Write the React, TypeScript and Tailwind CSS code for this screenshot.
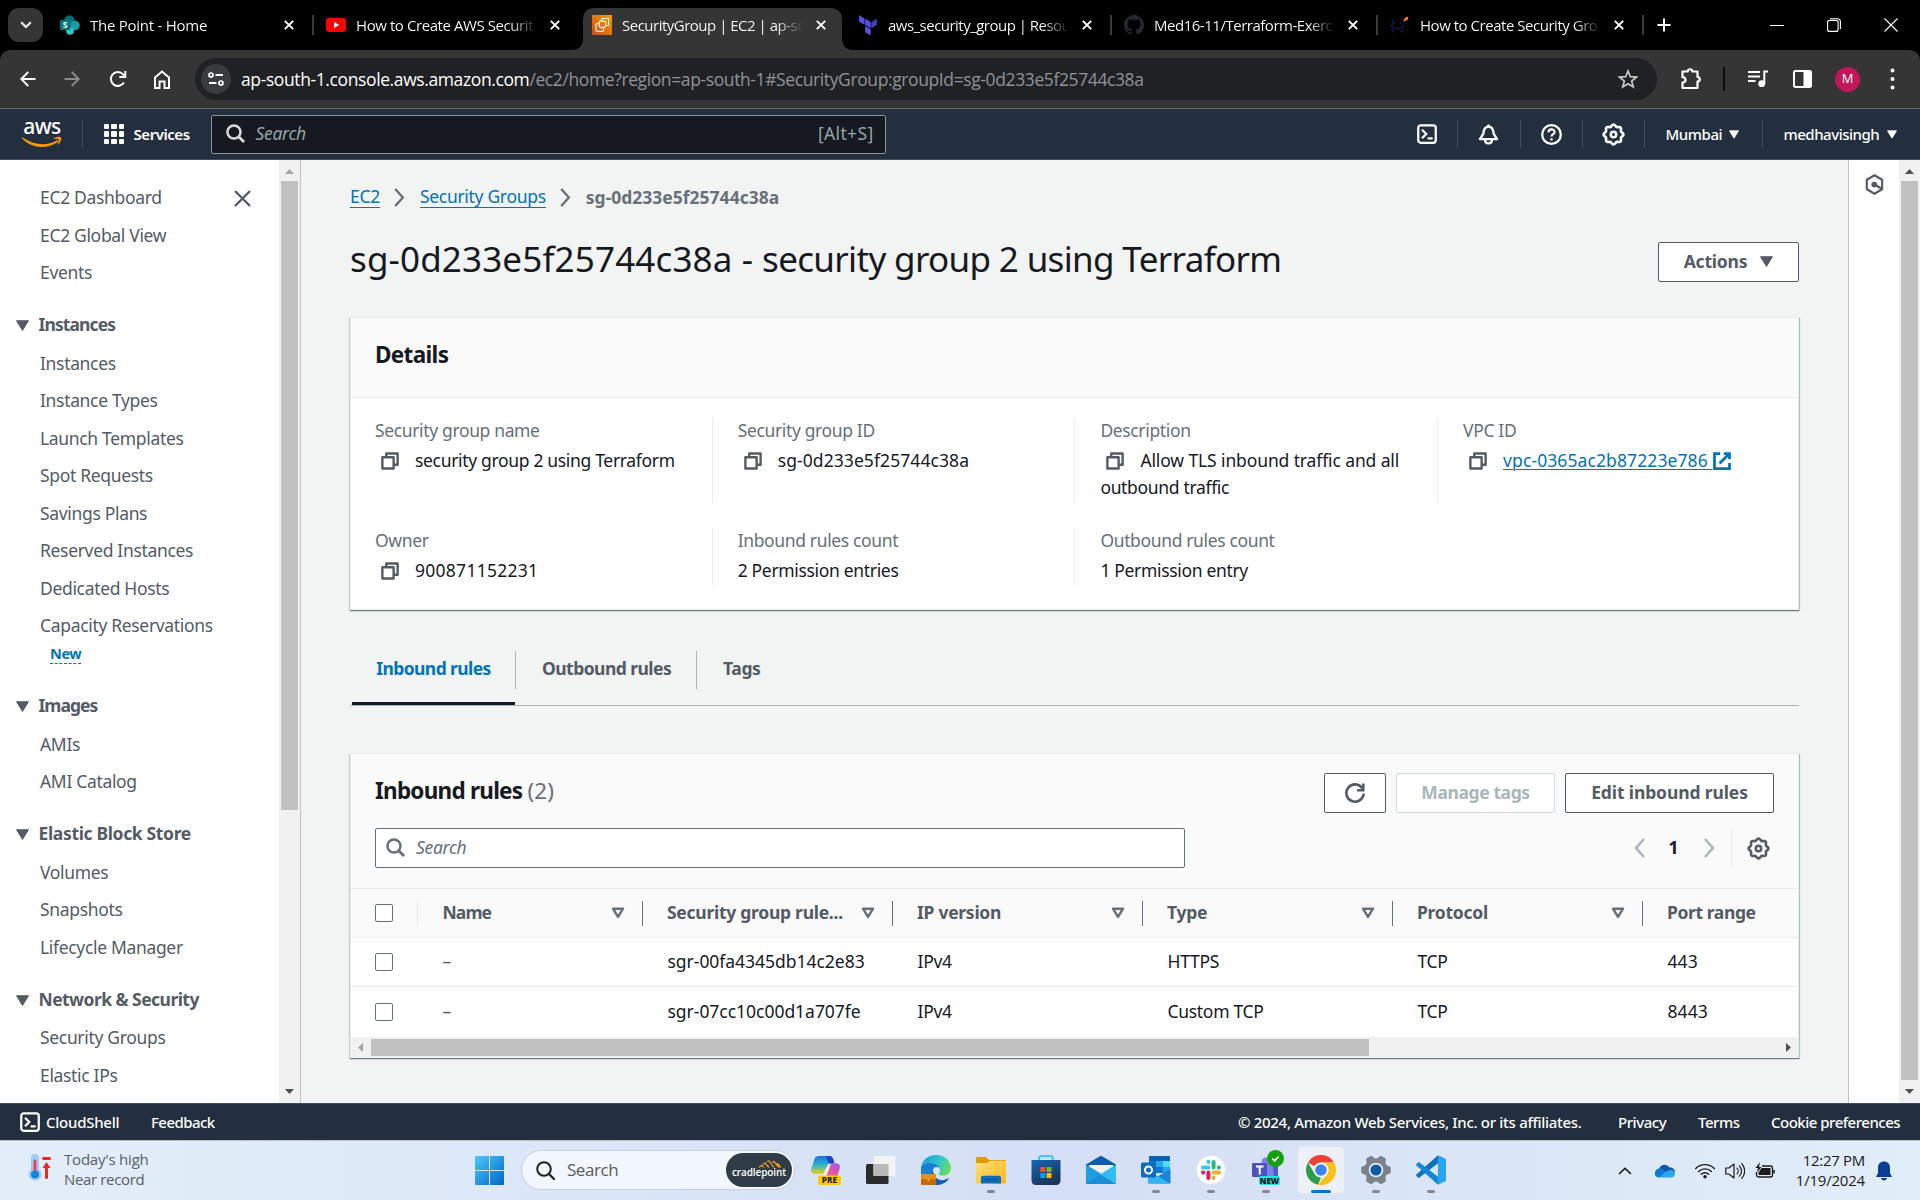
import type { ReactNode } from "react";

type IconProps = { className?: string; children?: ReactNode; box?: string };

function Svg({ className = "", children, box = "0 0 16 16" }: IconProps) {
  return (
    <svg viewBox={box} className={`shrink-0 ${className}`} fill="none">
      {children}
    </svg>
  );
}

/* ---------- shared glyphs ---------- */

const gearPath = (() => {
  const pts: string[] = [];
  for (let i = 0; i < 96; i++) {
    const a = (i / 96) * Math.PI * 2;
    const r = 6.25 + 0.6 * Math.cos(8 * a);
    pts.push(`${(8 + r * Math.cos(a)).toFixed(2)} ${(8 + r * Math.sin(a)).toFixed(2)}`);
  }
  return `M${pts.join("L")}Z`;
})();

const Gear = ({ className = "" }) => (
  <Svg className={className}>
    <path d={gearPath} stroke="currentColor" strokeWidth="1.8" />
    <circle cx="8" cy="8" r="1.9" stroke="currentColor" strokeWidth="1.7" />
  </Svg>
);
const ShellIcon = ({ className = "" }) => (
  <Svg className={className}>
    <rect x="1" y="1" width="14" height="14" rx="2" stroke="currentColor" strokeWidth="1.8" />
    <path d="M4 4.6 7.4 8 4 11.4M8.5 11.5h4" stroke="currentColor" strokeWidth="1.8" />
  </Svg>
);
const Glass = ({ className = "" }) => (
  <Svg className={className}>
    <circle cx="6.7" cy="6.7" r="5.5" stroke="currentColor" strokeWidth="2.1" />
    <path d="m10.7 10.7 4.5 4.5" stroke="currentColor" strokeWidth="2.3" />
  </Svg>
);
const CopyIcon = ({ className = "" }) => (
  <Svg className={`h-[20px] w-[20px] text-[#545b64] ${className}`}>
    <path d="M1.9 5h9v9h-9zM5 5V2h9.1v9H11" stroke="currentColor" strokeWidth="1.9" strokeLinejoin="round" />
  </Svg>
);
const Chevron = ({ className = "", left = false }) => (
  <Svg className={className} box="0 0 11 20">
    <path d={left ? "M10 1 2 10l8 9" : "M1 1l8 9-8 9"} stroke="currentColor" strokeWidth="2.5" />
  </Svg>
);
const Caret = ({ className = "" }) => (
  <Svg className={className} box="0 0 12 10">
    <path d="M.6.6h10.8L6 9.4z" fill="currentColor" stroke="currentColor" strokeLinejoin="round" />
  </Svg>
);
const HollowCaret = () => (
  <Svg className="h-[12px] w-[14px] text-[#687078]" box="0 0 14 12">
    <path d="M2 1.7h10L7 9.9z" stroke="currentColor" strokeWidth="2.5" strokeLinejoin="round" />
  </Svg>
);
const Cross = ({ className = "" }) => (
  <Svg className={className} box="0 0 10 10">
    <path d="m.8.8 8.4 8.4M9.2.8.8 9.2" stroke="currentColor" strokeWidth="1.9" />
  </Svg>
);

/* ---------- favicons ---------- */

const SharePoint = () => (
  <Svg className="h-5 w-5" box="0 0 20 20">
    <circle cx="9.5" cy="5.5" r="5.3" fill="#036c70" />
    <circle cx="15" cy="10.5" r="4.8" fill="#1a9ba1" />
    <circle cx="10" cy="16" r="3.8" fill="#37c6d0" />
    <rect x="0" y="5" width="10.5" height="10" rx="1" fill="#03787c" />
    <text x="5.2" y="13.2" textAnchor="middle" fontSize="8.5" fontWeight="700" fill="#fff" fontFamily="Noto Sans, sans-serif">S</text>
  </Svg>
);
const YouTube = () => (
  <Svg className="h-5 w-5" box="0 0 20 20">
    <rect x="0" y="3" width="20" height="14" rx="3.2" fill="#f00" />
    <path d="M8 7v6l5.2-3z" fill="#fff" />
  </Svg>
);
const Ec2 = () => (
  <Svg className="h-5 w-5" box="0 0 20 20">
    <defs>
      <linearGradient id="ec2" x1="0" y1="1" x2="1" y2="0">
        <stop stopColor="#c8511b" />
        <stop offset="1" stopColor="#f90" />
      </linearGradient>
    </defs>
    <path fill="url(#ec2)" d="M0 0h20v20H0z" />
    <path d="M7.5 6.2h6v6h-6zM9.5 6V3.5h7v7h-2.8M7.3 8.8H4v7.5h7.5v-3.7" stroke="#fff" strokeWidth="1" />
    <path d="M9 5v1.2M11 5v1.2M9 12.2v1.4M11.5 12.2v1.4M6.2 8h1.3M6.2 10.5h1.3M13.5 8h1.3M13.5 10.5h1.3" stroke="#fff" strokeWidth=".8" />
  </Svg>
);
const TerraformMark = () => (
  <Svg className="h-5 w-5" box="0 0 20 20">
    <path d="M1 .2 6.5 3.4v6.3L1 6.5zM7.2 3.8l5.5 3.2v6.3L7.2 10.1zM7.2 11l5.5 3.2v6.3L7.2 17.2z" fill="#5c4ee5" />
    <path d="m13.4 7 5.4-3.2v6.3l-5.4 3.2z" fill="#4040b2" />
  </Svg>
);
const GitHubMark = () => (
  <Svg className="h-5 w-5" box="0 0 16 16">
    <path
      fill="#24292f"
      d="M8 0C3.580 0 0 3.580 0 8c0 3.540 2.290 6.530 5.470 7.590.4.070.55-.17.55-.38 0-.19-.01-.82-.01-1.490-2.010.37-2.530-.49-2.690-.94-.09-.23-.48-.94-.82-1.130-.28-.15-.68-.52-.01-.53.63-.01 1.080.58 1.230.82.72 1.210 1.870.87 2.330.66.07-.52.28-.87.51-1.070-1.780-.2-3.640-.89-3.640-3.950 0-.87.31-1.590.82-2.150-.08-.2-.36-1.020.08-2.120 0 0 .67-.21 2.200.82.64-.18 1.320-.27 2-.27s1.360.09 2 .27c1.530-1.040 2.200-.82 2.200-.82.44 1.100.16 1.920.08 2.120.51.56.82 1.270.82 2.150 0 3.070-1.870 3.750-3.650 3.950.29.25.54.73.54 1.480 0 1.070-.01 1.930-.01 2.200 0 .21.15.46.55.38A8.010 8.010 0 0 0 16 8c0-4.420-3.580-8-8-8z"
    />
  </Svg>
);
const SmileMark = () => (
  <Svg className="h-5 w-5" box="0 0 20 20">
    <path d="M4 5.5H2.5v4L1 11l1.5 1.5v4H4M10 16.5h2.5v-7M5 12c1.5 2.5 4.5 2.5 6 0M5 7v2M10.5 7v2" stroke="#14143c" strokeWidth="1.5" />
    <path d="m13 7 2-4.500 3 2z" fill="#ff7a1a" />
    <circle cx="17" cy="3" r="1.300" fill="#ff7a1a" />
  </Svg>
);

/* ---------- browser chrome ---------- */

const browserTabs = [
  { title: "The Point - Home", icon: <SharePoint />, sep: true, spacing: "tracking-[-0.25px]" },
  { title: "How to Create AWS Securit", icon: <YouTube />, spacing: "tracking-[-0.42px]" },
  { title: "SecurityGroup | EC2 | ap-so", icon: <Ec2 />, active: true, spacing: "tracking-[-0.5px]" },
  { title: "aws_security_group | Resou", icon: <TerraformMark />, sep: true, spacing: "tracking-[-0.52px]" },
  { title: "Med16-11/Terraform-Exerc", icon: <GitHubMark />, sep: true, spacing: "tracking-[-0.48px]" },
  { title: "How to Create Security Gro", icon: <SmileMark />, sep: true, spacing: "tracking-[-0.47px]" },
];

function TabStrip() {
  return (
    <div className="flex h-[50px] shrink-0 bg-black text-white">
      <div className="mt-2 ml-2 flex h-[34px] w-[35px] items-center justify-center rounded-[11px] bg-[#353535]">
        <Svg className="h-[8px] w-[12px]" box="0 0 12 8">
          <path d="m1.200 1.200 4.800 4.800 4.800-4.800" stroke="#fff" strokeWidth="2" />
        </Svg>
      </div>
      <div className="ml-[3px] flex">
        {browserTabs.map((t) => (
          <div key={t.title} className="relative flex w-[266px] items-center">
            {t.active && (
              <Svg className="absolute top-2 -left-[7px] h-[42px] w-[283px]" box="0 0 283 42">
                <path d="M0 42Q12 42 12 30V12Q12 0 24 0H259Q271 0 271 12V30Q271 42 283 42Z" fill="#353535" />
              </Svg>
            )}
            <div className="relative ml-[14px] h-5 w-5">{t.icon}</div>
            <div className={`relative ml-[10px] w-[181px] bg-linear-to-r from-white from-85% to-transparent bg-clip-text font-['Open_Sans'] text-[15px] leading-[24px] whitespace-nowrap text-transparent ${t.spacing}`}>
              {t.title}
            </div>
            <Cross className="relative ml-[13px] h-[10px] w-[10px]" />
            {t.sep && <div className="-mr-[1.5px] ml-auto h-5 w-[2px] bg-[#3a3a3a]" />}
          </div>
        ))}
      </div>
      <Svg className="mt-[18px] ml-[15px] h-[14px] w-[14px]" box="0 0 14 14">
        <path d="M7 .5v13M.5 7h13" stroke="#fff" strokeWidth="2" />
      </Svg>
      <div className="ml-auto flex items-center gap-[43px] pr-[22px]">
        <div className="h-px w-[14px] bg-white" />
        <Svg className="h-[14px] w-[14px]" box="0 0 14 14">
          <rect x=".6" y="2.400" width="10.500" height="11" rx="2" stroke="#fff" strokeWidth="1.100" />
          <path d="M3 .7h7.500a2.900 2.900 0 0 1 2.900 2.900V11" stroke="#fff" strokeWidth="1.100" />
        </Svg>
        <Svg className="h-[14px] w-[14px]" box="0 0 14 14">
          <path d="m.5.5 13 13M13.500.5l-13 13" stroke="#fff" strokeWidth="1.100" />
        </Svg>
      </div>
    </div>
  );
}

function Toolbar() {
  return (
    <div className="shrink-0 bg-black">
      <div className="flex h-[58px] items-center rounded-t-[10px] bg-[#353535] text-white">
        <Svg className="ml-[20px] h-4 w-4" box="0 0 16 16">
          <path d="M15.500 8H1.500M8.200 1 1.300 8l6.900 7" stroke="#fff" strokeWidth="2" />
        </Svg>
        <Svg className="ml-[28px] h-4 w-4" box="0 0 16 16">
          <path d="M.5 8h14M7.800 1l6.900 7-6.900 7" stroke="#8a8a8a" strokeWidth="2" />
        </Svg>
        <Svg className="ml-[29px] h-[18px] w-[18px]" box="0 0 18 18">
          <path d="M14.900 12.500A7 7 0 1 1 14 4.200L15.800 6" stroke="#fff" strokeWidth="2" />
          <path d="M16.300 1v6h-6" stroke="#fff" strokeWidth="2" />
        </Svg>
        <Svg className="ml-[27px] h-[19px] w-[16px]" box="0 0 16 19">
          <path d="M1 7.500 8 1.500l7 6V18h-4.500v-6.500h-5V18H1z" stroke="#fff" strokeWidth="2" />
        </Svg>
        <div className="ml-[25px] flex h-[42px] w-[1462px] items-center rounded-full bg-[#202124]">
          <div className="ml-[6px] flex h-[30px] w-[30px] items-center justify-center rounded-full bg-[#3a3b3e]">
            <Svg className="h-[14px] w-[16px]" box="0 0 16 14">
              <circle cx="3" cy="3" r="2" stroke="#fff" strokeWidth="1.700" />
              <circle cx="13" cy="11" r="2" stroke="#fff" strokeWidth="1.700" />
              <path d="M7.500 3H15M1 11h7.500" stroke="#fff" strokeWidth="1.800" />
            </Svg>
          </div>
          <div className="ml-[10px] font-['Open_Sans'] text-[17.5px] leading-[26px] tracking-[-0.39px] whitespace-nowrap text-[#8f9398]">
            <span className="text-white">ap-south-1.console.aws.amazon.com</span>
            /ec2/home?region=ap-south-1#SecurityGroup:groupId=sg-0d233e5f25744c38a
          </div>
          <Svg className="mr-[19px] ml-auto h-5 w-5" box="0 0 20 20">
            <path d="m10 2 2.300 5.700 6.100.4-4.700 3.900 1.500 6L10 14.700 4.800 18l1.500-6L1.600 8.100l6.100-.4z" stroke="#c7c7c7" strokeWidth="1.700" />
          </Svg>
        </div>
        <Svg className="ml-[23px] h-[24px] w-[22px]" box="0 0 22 24">
          <path d="M2.500 4.500h5.200c0-3 4.600-3 4.600 0h5.200V10c3 0 3 4.500 0 4.500V21h-15v-5.500c4 0 4-5.300 0-5.300z" stroke="#fff" strokeWidth="2.200" strokeLinejoin="round" />
        </Svg>
        <div className="ml-[21px] h-6 w-[2px] bg-[#0c0c0c]" />
        <Svg className="ml-[23px] h-[18px] w-[20px]" box="0 0 20 18">
          <path d="M0 2h12M0 6.500h12M0 11h7.500M16.300 14V1.500H20" stroke="#fff" strokeWidth="2" />
          <circle cx="13.700" cy="13.700" r="3.400" fill="#fff" />
        </Svg>
        <Svg className="ml-[25px] h-[18px] w-[19px]" box="0 0 19 18">
          <rect x="1" y="1" width="17" height="16" rx="1.500" stroke="#fff" strokeWidth="2" />
          <path d="M10.500 1H18v16h-7.500z" fill="#fff" />
        </Svg>
        <div className="ml-[23px] flex h-[25px] w-[25px] items-center justify-center rounded-full bg-[#c2185b] font-['Open_Sans'] text-[13px]">
          M
        </div>
        <Svg className="ml-[30px] h-[22px] w-[5px]" box="0 0 5 22">
          <path d="M2.500 2.500h0M2.500 11h0M2.500 19.500h0" stroke="#fff" strokeWidth="4" strokeLinecap="round" />
        </Svg>
      </div>
    </div>
  );
}

/* ---------- AWS navigation ---------- */

const NavSep = ({ className = "" }) => <div className={`h-7 w-px shrink-0 bg-[#414d5c] ${className}`} />;

function AwsNav() {
  return (
    <div className="flex h-[52px] shrink-0 items-center border-t border-b border-t-[#6b6b66] border-b-[#414d5c] bg-[#232f3e] text-white">
      <div className="ml-[22px] flex w-[40px] flex-col items-center">
        <span className="h-[16px] font-['Noto_Sans'] text-[21px] leading-[12px] font-medium tracking-[-0.6px]">aws</span>
        <Svg className="h-[12px] w-[40px]" box="0 0 40 12">
          <path d="M.6 1.600C11 9 25 10.500 34.500 4.400c1.500-.7 2.500.7 1.200 1.600C25 13.600 9.500 12.800.2 2.600c-.5-.6-.2-1.300.4-1z" fill="#f90" />
          <path d="M31.500 2.300C34 .4 38 .2 39 1.300c.8 1.200-.2 5-2.600 7-.5.400-.9.200-.7-.3.800-2 1.500-4 .9-4.700-.6-.7-2.900-.6-4.600-.4-.600 0-.8-.4-.5-.6z" fill="#f90" />
        </Svg>
      </div>
      <NavSep className="ml-[20px]" />
      <div className="ml-[20.5px] grid grid-cols-3 gap-[2px]">
        {Array.from({ length: 9 }, (_, i) => (
          <div key={i} className="h-[5.5px] w-[5.5px] rounded-[1px] bg-white" />
        ))}
      </div>
      <span className="ml-[9.5px] w-[57px] text-[15px] font-semibold tracking-[-0.45px]">Services</span>
      <div className="ml-[20px] flex h-[39px] w-[675px] items-center rounded-[2px] border border-[#879596] bg-[#161920] pb-px">
        <Glass className="ml-[14px] h-[19px] w-[19px] text-[#d5dbdb]" />
        <span className="ml-[11px] text-[17.5px] tracking-[-0.3px] text-[#95a5a6] italic">Search</span>
        <span className="mr-[11px] ml-auto text-[17.5px] tracking-[0.35px] text-[#95a5a6]">[Alt+S]</span>
      </div>
      <ShellIcon className="ml-[531px] h-[20px] w-[20px]" />
      <NavSep className="ml-[20px]" />
      <Svg className="ml-[20px] h-[21px] w-[21px]" box="0 0 16 16">
        <path d="M1.500 11.500 4 7.500C4.300 4 5.500 2 8 2s3.700 2 4 5.500l2.500 4z" stroke="#fff" strokeWidth="1.800" strokeLinejoin="round" />
        <path d="M8 2V.4M5.500 11.500v1c0 3 5 3 5 0v-1" stroke="#fff" strokeWidth="1.800" />
      </Svg>
      <NavSep className="ml-[21px]" />
      <Svg className="ml-[20px] h-[21px] w-[21px]" box="0 0 16 16">
        <circle cx="8" cy="8" r="7.100" stroke="#fff" strokeWidth="1.700" />
        <path d="M5.700 6.300C5.700 3.300 10.300 3.300 10.300 6.200 10.300 7.700 8 7.800 8 9.600M8 10.800v1.700" stroke="#fff" strokeWidth="1.700" />
      </Svg>
      <NavSep className="ml-[20px]" />
      <Gear className="ml-[19px] h-[23px] w-[23px]" />
      <NavSep className="ml-[19px]" />
      <span className="ml-[21px] w-[57px] text-[15px] font-medium tracking-[-0.45px]">Mumbai</span>
      <Caret className="ml-[6px] h-[9px] w-[10px]" />
      <NavSep className="ml-[23px]" />
      <span className="ml-[21px] w-[97px] text-[15px] font-medium tracking-[-0.48px]">medhavisingh</span>
      <Caret className="ml-[6px] h-[9px] w-[10px]" />
    </div>
  );
}

/* ---------- sidebar ---------- */

const sections = [
  {
    title: "Instances",
    items: ["Instances", "Instance Types", "Launch Templates", "Spot Requests", "Savings Plans", "Reserved Instances", "Dedicated Hosts", "Capacity Reservations"],
    isNew: true,
    spacing: "tracking-[-0.9px]",
  },
  { title: "Images", items: ["AMIs", "AMI Catalog"], spacing: "tracking-[-0.95px]" },
  { title: "Elastic Block Store", items: ["Volumes", "Snapshots", "Lifecycle Manager"], spacing: "tracking-[-0.35px]" },
  { title: "Network & Security", items: ["Security Groups", "Elastic IPs"], spacing: "tracking-[-0.55px]" },
];

const NavItem = ({ text }: { text: string }) => (
  <div className="flex h-[37.5px] items-center pl-[40px] text-[17.5px] tracking-[-0.33px] text-[#545b64]">{text}</div>
);

const ScrollArrow = ({ up = false, className = "" }) => (
  <Svg className={`h-[5px] w-[9px] ${className}`} box="0 0 9 5">
    <path d={up ? "M0 5 4.500 0 9 5z" : "M0 0l4.500 5L9 0z"} fill="currentColor" />
  </Svg>
);

function Sidebar() {
  return (
    <div className="flex w-[301px] shrink-0 border-r border-[#bcc3c4] bg-white">
      <div className="flex-1 overflow-hidden pt-[18.6px]">
        <div className="flex justify-between pr-[28px]">
          <NavItem text="EC2 Dashboard" />
          <Svg className="mt-[11.4px] h-[17px] w-[17px]" box="0 0 17 17">
            <path d="m1 1 15 15M16 1 1 16" stroke="#545b64" strokeWidth="2.400" />
          </Svg>
        </div>
        <NavItem text="EC2 Global View" />
        <NavItem text="Events" />
        {sections.map((s) => (
          <div key={s.title} className="pt-[19.5px]">
            <div className="mb-[6px] flex h-[27.5px] items-center">
              <Caret className="mt-[3px] ml-[15.5px] h-[11px] w-[13px] text-[#545b64]" />
              <span className={`ml-[10px] text-[17.5px] font-bold text-[#545b64] ${s.spacing}`}>{s.title}</span>
            </div>
            {s.items.map((i) => (
              <NavItem key={i} text={i} />
            ))}
            {s.isNew && (
              <div className="-mt-[3px] h-[31px] pl-[50px]">
                <span className="inline-block border-b border-dashed border-[#0073bb] text-[14.5px] leading-[20px] font-bold tracking-[-0.4px] text-[#0073bb]">New</span>
              </div>
            )}
          </div>
        ))}
      </div>
      <div className="flex w-[21px] flex-col items-center bg-[#f1f1f1]">
        <ScrollArrow up className="mt-[9px] text-[#a3a3a3]" />
        <div className="mt-[7px] h-[629px] w-[17px] bg-[#c1c1c1]" />
        <ScrollArrow className="mt-auto mb-[9px] text-[#505050]" />
      </div>
    </div>
  );
}

/* ---------- details card ---------- */

function Cell({ label, children, last = false }: { label: string; children: ReactNode; last?: boolean }) {
  return (
    <div className={`w-[362.7px] shrink-0 pr-[20px] pl-[25px] ${last ? "" : "border-r border-[#eaeded]"}`}>
      <div className="text-[17.5px] leading-[25px] tracking-[-0.36px] text-[#687078]">{label}</div>
      <div className="mt-[4px] text-[17.5px] leading-[27px] tracking-[-0.33px] text-[#16191f]">{children}</div>
    </div>
  );
}

const Copyable = ({ children }: { children: ReactNode }) => (
  <>
    <CopyIcon className="mr-[15px] ml-[5px] inline-block align-[-4px]" />
    {children}
  </>
);

const card = "border border-[#eaeded] bg-white shadow-[0_1px_1px_#6f8083,1px_1px_1px_#c3caca,-1px_1px_1px_#d5dbdb]";

function Details() {
  return (
    <div className={`mt-[35px] h-[293px] w-[1449px] ${card}`}>
      <div className="flex h-[80px] items-center border-b border-[#eaeded] bg-[#fafafa] pb-[5px] pl-[24px] text-[22.5px] font-bold tracking-[-0.65px] text-[#16191f]">
        Details
      </div>
      <div className="-ml-px flex h-[105px] pt-[20px]">
        <Cell label="Security group name">
          <Copyable>security group 2 using Terraform</Copyable>
        </Cell>
        <Cell label="Security group ID">
          <Copyable>
            <span className="tracking-[0.08px]">sg-0d233e5f25744c38a</span>
          </Copyable>
        </Cell>
        <Cell label="Description">
          <Copyable>
            <span className="tracking-[-0.12px]">Allow TLS inbound traffic and all</span> outbound traffic
          </Copyable>
        </Cell>
        <Cell label="VPC ID" last>
          <Copyable>
            <span className="tracking-[0.1px] text-[#0073bb] underline decoration-1 underline-offset-2">vpc-0365ac2b87223e786 </span>
            <Svg className="inline-block h-[20px] w-[20px] align-[-4px]" box="0 0 16 16">
              <path d="M9.500 2H14v4.500M6 10l8-8M14 9.500V14H2V2h4.500" stroke="#0073bb" strokeWidth="2.200" />
            </Svg>
          </Copyable>
        </Cell>
      </div>
      <div className="mt-[25px] -ml-px flex h-[57px]">
        <Cell label="Owner">
          <Copyable>
            <span className="tracking-[0.27px]">900871152231</span>
          </Copyable>
        </Cell>
        <Cell label="Inbound rules count">2 Permission entries</Cell>
        <Cell label="Outbound rules count" last>
          1 Permission entry
        </Cell>
      </div>
    </div>
  );
}

/* ---------- inbound rules ---------- */

function Tabs() {
  return (
    <div className="mt-[26px] flex h-[70px] w-[1449px] border-b border-[#aab7b8] text-[17.5px] font-bold tracking-[-0.6px] text-[#545b64]">
      <div className="ml-[2px] flex h-[69px] w-[163px] justify-center border-b-[3px] border-[#16191f] pt-[19px] text-[#0073bb]">Inbound rules</div>
      <div className="mt-[15px] h-[38px] w-px bg-[#aab7b8]" />
      <div className="w-[180px] pt-[19px] pl-[26px] tracking-[-0.55px]">Outbound rules</div>
      <div className="mt-[15px] h-[38px] w-px bg-[#aab7b8]" />
      <div className="pt-[19px] pl-[26px] tracking-[-0.4px]">Tags</div>
    </div>
  );
}

const Box = () => <div className="h-[18px] w-[18px] rounded-[2px] border border-[#687078] bg-white" />;

const columns = ["Security group rule...", "IP version", "Type", "Protocol"];
const rows = [
  ["sgr-00fa4345db14c2e83", "IPv4", "HTTPS", "TCP", "443"],
  ["sgr-07cc10c00d1a707fe", "IPv4", "Custom TCP", "TCP", "8443"],
];
const btn = "flex h-[40px] items-center justify-center rounded-[2px] border bg-white text-[17.5px] font-bold";

function Rules() {
  return (
    <div className={`mt-[47px] h-[305px] w-[1449px] ${card}`}>
      <div className="h-[134px] bg-[#fafafa]">
        <div className="flex pt-[19px] pl-[24px]">
          <div className="pt-px text-[22.5px] font-bold tracking-[-0.75px] text-[#16191f]">
            Inbound rules <span className="font-normal tracking-[0.1px] text-[#687078]">(2)</span>
          </div>
          <div className="mr-[24px] ml-auto flex gap-[10px]">
            <div className={`${btn} w-[62px] border-[#545b64]`}>
              <Svg className="h-[22px] w-[22px]">
                <path d="M14.300 8.500A6.300 6.300 0 1 1 13.300 4.600" stroke="#545b64" strokeWidth="1.900" />
                <path d="M14 1v5H9.500" stroke="#545b64" strokeWidth="1.900" />
              </Svg>
            </div>
            <div className={`${btn} w-[159px] border-[#d5dbdb] pb-[2px] tracking-[-0.4px] text-[#aab7b8]`}>Manage tags</div>
            <div className={`${btn} w-[209px] border-[#545b64] pb-[2px] tracking-[-0.12px] text-[#545b64]`}>Edit inbound rules</div>
          </div>
        </div>
        <div className="mt-[15px] flex items-center pl-[24px]">
          <div className="flex h-[40px] w-[810px] items-center rounded-[2px] border border-[#687078] bg-white pb-px">
            <Glass className="ml-[10px] h-[19px] w-[19px] text-[#687078]" />
            <span className="ml-[11px] text-[17.5px] tracking-[-0.3px] text-[#687078] italic">Search</span>
          </div>
          <Chevron left className="ml-[449px] h-[20px] w-[11px] text-[#aab7b8]" />
          <span className="ml-[22.5px] w-[12px] pb-px text-center text-[17.5px] font-bold text-[#16191f]">1</span>
          <Chevron className="ml-[24px] h-[20px] w-[11px] text-[#aab7b8]" />
          <div className="ml-[16px] h-[38px] w-px bg-[#eaeded]" />
          <Gear className="ml-[15px] h-[23px] w-[23px] text-[#545b64]" />
        </div>
      </div>
      <div className="flex h-[50px] items-center border-y border-[#eaeded] bg-[#fafafa] pl-[24px] text-[17.5px] leading-[24px] font-bold text-[#545b64]">
        <Box />
        <div className="ml-[24px] h-[25px] w-px bg-[#eaeded]" />
        <div className="flex w-[224px] items-center pl-[24.5px]">
          <span className="pb-[3px] tracking-[-0.9px]">Name</span>
          <span className="mr-[17px] ml-auto">
            <HollowCaret />
          </span>
        </div>
        {columns.map((c) => (
          <div key={c} className="flex w-[250px] items-center">
            <div className="mr-[24px] h-[25px] w-px bg-[#687078]" />
            <span className="pb-[3px] tracking-[-0.27px]">{c}</span>
            <span className="mr-[17px] ml-auto">
              <HollowCaret />
            </span>
          </div>
        ))}
        <div className="mr-[24px] h-[25px] w-px bg-[#687078]" />
        <span className="pb-[3px] tracking-[-0.4px]">Port range</span>
      </div>
      {rows.map((r, k) => (
        <div
          key={r[0]}
          className={`flex items-center pl-[24px] text-[17.5px] leading-[24px] tracking-[-0.3px] text-[#16191f] ${k === 0 ? "h-[49px] border-b border-[#eaeded]" : "h-[50px]"}`}
        >
          <Box />
          <span className="ml-[49.5px] w-[225px] pb-[3px] text-[#545b64]">–</span>
          <span className="w-[250px] pb-[3px] tracking-[-0.03px]">{r[0]}</span>
          {r.slice(1).map((v, i) => (
            <span key={i} className={i === 3 ? "pb-[3px] tracking-[0.1px]" : "w-[250px] pb-[3px]"}>
              {v}
            </span>
          ))}
        </div>
      ))}
      <div className="flex h-[21px] items-center bg-[#f1f1f1]">
        <Svg className="ml-[7px] h-[9px] w-[5px]" box="0 0 5 9">
          <path d="M5 0 0 4.500 5 9z" fill="#a3a3a3" />
        </Svg>
        <div className="ml-[8px] h-[17px] w-[998px] bg-[#c1c1c1]" />
        <Svg className="mr-[7px] ml-auto h-[9px] w-[5px]" box="0 0 5 9">
          <path d="m0 0 5 4.500L0 9z" fill="#505050" />
        </Svg>
      </div>
    </div>
  );
}

function Main() {
  return (
    <div className="flex-1 overflow-hidden bg-[#f2f3f3] pl-[49px]">
      <div className="mt-[23px] flex h-[28px] items-center text-[17.5px] tracking-[-0.3px] text-[#0073bb]">
        <span className="border-b border-[#0073bb] leading-[21px]">EC2</span>
        <Chevron className="ml-[14.5px] h-[19px] w-[11px] text-[#687078]" />
        <span className="ml-[14.5px] border-b border-[#0073bb] leading-[21px]">Security Groups</span>
        <Chevron className="ml-[14px] h-[19px] w-[11px] text-[#687078]" />
        <span className="ml-[15px] font-bold tracking-[0px] text-[#687078]">sg-0d233e5f25744c38a</span>
      </div>
      <div className="mt-[30px] flex h-[41px] items-center text-[#16191f]">
        <span className="pb-[5px] text-[35px]">
          <span className="tracking-[0.15px]">sg-0d233e5f25744c38a</span>
          <span className="tracking-[0px]"> - </span>
          <span className="tracking-[-0.66px]">security group 2 using Terraform</span>
        </span>
        <div className={`${btn} mr-[49px] ml-auto w-[141px] border-[#545b64] pb-px text-[#545b64]`}>
          <span className="tracking-[-0.2px]">Actions</span>
          <Caret className="ml-[13px] h-[11px] w-[13px]" />
        </div>
      </div>
      <Details />
      <Tabs />
      <Rules />
    </div>
  );
}

function RightRail() {
  return (
    <>
      <div className="w-[51px] shrink-0 border-l border-[#bcc3c4] bg-white pt-[14px] pl-[15px]">
        <Svg className="h-[21px] w-[21px]" box="0 0 20 20">
          <path d="m10 1.200 7.300 4.300v9L10 18.800l-7.300-4.300v-9z" stroke="#545b64" strokeWidth="2" strokeLinejoin="round" />
          <path d="M9.800 7.300a2.800 2.800 0 1 0 2.800 2.800 2.800 2.800 0 0 0-2.800-2.800z" fill="#545b64" />
          <path d="m10 10 6.500 3.800" stroke="#545b64" strokeWidth="2.200" />
        </Svg>
      </div>
      <div className="flex w-[21px] shrink-0 flex-col items-center bg-[#f1f1f1]">
        <ScrollArrow up className="mt-[9px] text-[#505050]" />
        <div className="mt-[7px] h-[899px] w-[17px] bg-[#c1c1c1]" />
        <ScrollArrow className="mt-[9px] text-[#505050]" />
      </div>
    </>
  );
}

function Footer() {
  return (
    <div className="flex h-[37px] shrink-0 items-center border-t border-[#414d5c] bg-[#232f3e] text-[15px] font-medium tracking-[-0.45px] whitespace-nowrap text-white">
      <ShellIcon className="ml-[20px] h-[20px] w-[20px]" />
      <span className="ml-[6px] w-[74px] tracking-[-0.25px]">CloudShell</span>
      <span className="ml-[31px] tracking-[-0.55px]">Feedback</span>
      <span className="ml-auto w-[343px] tracking-[-0.3px]">© 2024, Amazon Web Services, Inc. or its affiliates.</span>
      <span className="ml-[37px] w-[49px]">Privacy</span>
      <span className="ml-[31px] w-[42px]">Terms</span>
      <span className="mr-[19px] ml-[31px] w-[130px] tracking-[-0.5px]">Cookie preferences</span>
    </div>
  );
}

/* ---------- Windows taskbar ---------- */

const Copilot = () => (
  <Svg className="h-[30px] w-[30px]" box="0 0 30 30">
    <defs>
      <linearGradient id="cpa" x1="0" y1="0" x2="0" y2="1">
        <stop stopColor="#1b6fe8" />
        <stop offset=".5" stopColor="#2fb4c8" />
        <stop offset="1" stopColor="#e8d21f" />
      </linearGradient>
      <linearGradient id="cpb" x1="1" y1="0" x2="0" y2="1">
        <stop stopColor="#a04df0" />
        <stop offset=".55" stopColor="#ee5a9c" />
        <stop offset="1" stopColor="#f9873e" />
      </linearGradient>
    </defs>
    <path d="M8 1h10c3 0 4 2 4.700 5l.8 2.500H18L13 19H4c-3.500 0-4.500-2.500-3.500-6L3.500 4C4.300 2 5.500 1 8 1z" fill="url(#cpa)" />
    <path d="M15 1h3c3 0 4 2 4.700 5l.8 2.500h-6z" fill="#1747c8" />
    <path d="M18.500 8.500H25c3.300 0 4.400 2 3.600 5l-2.300 8c-.7 2-2 3-4 3H10c3 0 4-3 5-6z" fill="url(#cpb)" />
    <path d="M17 9h3l-4.500 12h-4z" fill="#fff" opacity=".8" />
    <rect x="7" y="20.500" width="23" height="9.500" rx="2.500" fill="#ffc800" />
    <text x="18.500" y="28" fontSize="8" fontWeight="800" letterSpacing=".3" textAnchor="middle" fill="#1a1a1a" fontFamily="Noto Sans, sans-serif">PRE</text>
  </Svg>
);
const TaskView = () => (
  <Svg className="h-[30px] w-[30px]" box="0 0 30 30">
    <rect x="0" y="9" width="22.500" height="20" rx="1.500" fill="#2b2b2b" />
    <rect x="7.500" y="1" width="22" height="20" rx="1.500" fill="#f4f4f4" />
    <path d="M7.500 9h15v12h-15z" fill="#b9b9b9" />
  </Svg>
);
const Edge = () => (
  <Svg className="h-[30px] w-[30px]" box="0 0 30 30">
    <defs>
      <linearGradient id="eda" x1="0" y1=".3" x2="1" y2=".6">
        <stop stopColor="#1c9be0" />
        <stop offset=".6" stopColor="#35c8c8" />
        <stop offset="1" stopColor="#6be04a" />
      </linearGradient>
    </defs>
    <path d="M0 14C.5 5 7 0 15 0c9 0 15 6 15 13 0 5-3.500 7.500-8 7.500-3.500 0-5.200-1.500-4.200-3C19 15 17 9.500 11 9.500 5 9.500 1 12 0 14z" fill="url(#eda)" />
    <path d="M0 14c1-4 5-5.500 9.500-5.500 5 0 9 3 9 6-3-2-6 0-5.500 4 .6 4.500 5 7.500 10 6.500l5-2C25 28.500 20 30 15 30 6 30 0 23 0 14z" fill="#0f5fb4" />
    <path d="M0 14c1-4 5-5.500 9.500-5.500 5 0 9 3 9 6-4-2.500-8 1-7 6L0 20z" fill="#1a7fd0" />
    <circle cx="15.500" cy="15.500" r="3.500" fill="#dbe5f7" />
    <rect x="0" y="19" width="15" height="11" rx="1" fill="#c46a06" />
    <rect x="0" y="19" width="15" height="5" fill="#e88f15" />
    <circle cx="7.500" cy="25" r="1.100" fill="#ffd34d" />
  </Svg>
);
const Folder = () => (
  <Svg className="h-[30px] w-[30px]" box="0 0 30 30">
    <defs>
      <linearGradient id="fo" x1="0" y1="0" x2="1" y2="1">
        <stop stopColor="#ffe07a" />
        <stop offset="1" stopColor="#fbb515" />
      </linearGradient>
    </defs>
    <path d="M0 3.500C0 2.500.7 2 1.500 2H10l3 3h15.500c1 0 1.500.5 1.500 1.500V15H0z" fill="#e09b06" />
    <path d="M0 8h11l3-2.300h14.500c1 0 1.500.5 1.500 1.500V27c0 1-.5 1.500-1.500 1.500h-27C.5 28.500 0 28 0 27z" fill="url(#fo)" />
    <path d="M5 28.500V23c0-1.500.7-2.200 2.200-2.200h15.600c1.500 0 2.200.7 2.200 2.200v5.500z" fill="#0f6cbd" />
    <path d="M8.500 24.600h13" stroke="#0b4f91" strokeWidth="1.300" />
  </Svg>
);
const Store = () => (
  <Svg className="h-[30px] w-[30px]" box="0 0 30 30">
    <defs>
      <linearGradient id="st" x1="0" y1="0" x2=".5" y2="1">
        <stop stopColor="#1167b8" />
        <stop offset="1" stopColor="#1d3557" />
      </linearGradient>
    </defs>
    <path d="M8.200 6V2.500c0-.8.5-1.300 1.300-1.300h10.800c.8 0 1.300.5 1.300 1.300V6" stroke="#36c3f4" strokeWidth="1.800" />
    <path d="M.5 5h29v20c0 3-1.500 5-4.500 5H5C2 30 .5 28 .5 25z" fill="url(#st)" />
    <path d="M9.300 12h5v5h-5z" fill="#f25022" />
    <path d="M15.500 12h5v5h-5z" fill="#7fba00" />
    <path d="M9.300 18h5v5h-5z" fill="#00a4ef" />
    <path d="M15.500 18h5v5h-5z" fill="#ffb900" />
  </Svg>
);
const Mail = () => (
  <Svg className="h-[30px] w-[30px]" box="0 0 30 30">
    <path d="M0 9.500 13.500 1.500c1-.6 2-.6 3 0L30 9.500V15H0z" fill="#0f5ba7" />
    <path d="M3 10h24v10H3z" fill="#f1f1f1" />
    <path d="M0 9.500 30 28c0 .6-.5 1-1 1H1c-.6 0-1-.4-1-1z" fill="#1f9fe0" />
    <path d="M30 9.500 14 19.500 29.500 29c.4-.2.5-.5.5-1z" fill="#35bdf2" />
    <path d="M0 28.500 14 19.500l16 9.500H.5z" fill="#1786cf" opacity=".6" />
  </Svg>
);
const Outlook = () => (
  <Svg className="h-[30px] w-[30px]" box="0 0 30 30">
    <path d="M8 2c0-.6.400-1 1-1h19c.6 0 1 .4 1 1v14H8z" fill="#0a63b0" />
    <path d="M8 6h7v6H8z" fill="#0f78d4" />
    <path d="M15 6h7v6h-7z" fill="#28a8ea" />
    <path d="M22 6h7v6h-7z" fill="#50d9ff" />
    <path d="M15 12h7v6h-7z" fill="#0f78d4" />
    <path d="M22 12h7v6h-7z" fill="#28a8ea" />
    <path d="M29.500 14 7 27c0 1 .5 1.500 1.500 1.500h20c.6 0 1-.4 1-1z" fill="#1b84d8" />
    <path d="M7 15v12c0 1 .5 1.500 1.500 1.500h20z" fill="#32b6f2" />
    <rect x="0" y="7.500" width="15" height="15" rx="1.500" fill="#0f6cbd" />
    <circle cx="7.500" cy="15" r="3.500" stroke="#fff" strokeWidth="2" />
  </Svg>
);
const Slack = () => (
  <Svg className="h-[30px] w-[30px]" box="0 0 30 30">
    <circle cx="15" cy="15" r="14.500" fill="#fff" stroke="#dcdce4" strokeWidth=".6" />
    <g strokeWidth="4" strokeLinecap="round">
      <path d="M12.400 6.800v.3M7 12.400h5.400" stroke="#36c5f0" />
      <path d="M17.600 7v5.400M23 12.400h-.3" stroke="#2eb67d" />
      <path d="M17.600 17.600H23M17.600 22.800v.3" stroke="#ecb22e" />
      <path d="M12.400 17.600V23M7 17.600h.3" stroke="#e01e5a" />
    </g>
  </Svg>
);
const Teams = () => (
  <div className="relative h-[30px] w-[30px]">
    <Svg className="h-[30px] w-[30px]" box="0 0 30 30">
      <circle cx="15" cy="7" r="4.500" fill="#7b83eb" />
      <path d="M12 9h15v10c0 6-4 8-8 8-5 0-7-4-7-7z" fill="#7b83eb" />
      <path d="M22 11h5v9l-4 3z" fill="#5059c9" />
      <rect x="1" y="8" width="15" height="14" rx="1.200" fill="#4b53bc" />
      <path d="M5 11.500h7.500M8.700 11.500v8" stroke="#fff" strokeWidth="2" />
    </Svg>
    <div className="absolute top-[21px] left-[8px] flex h-[9px] w-[21px] items-center justify-center rounded-[2px] bg-[#20e3e3] font-['Noto_Sans'] text-[8px] leading-[9px] font-black text-[#111]">NEW</div>
    <Svg className="absolute -top-[5px] left-[16px] h-[17px] w-[17px]" box="0 0 17 17">
      <circle cx="8.500" cy="8.500" r="8.500" fill="#13a10e" />
      <path d="m5.300 8.700 2.300 2.200 4-4.400" stroke="#fff" strokeWidth="1.800" />
    </Svg>
  </div>
);
const ChromeIcon = () => (
  <Svg className="h-[30px] w-[30px]" box="0 0 30 30">
    <path d="M2 7.500A15 15 0 0 1 28 7.500H15a7.500 7.500 0 0 0-6.500 3.750z" fill="#ea4335" />
    <path d="M2 7.500 8.500 18.750A7.500 7.500 0 0 0 15 22.500l-3 7.200A15 15 0 0 1 2 7.500z" fill="#2a9d47" />
    <path d="M28 7.500A15 15 0 0 1 12 29.700l9.500-10.950A7.500 7.500 0 0 0 15 7.500z" fill="#fbc116" />
    <circle cx="15" cy="15" r="7.300" fill="#fff" />
    <circle cx="15" cy="15" r="5.800" fill="#3b82f0" />
  </Svg>
);
const SettingsIcon = () => (
  <Svg className="h-[30px] w-[30px]" box="0 0 30 30">
    <g fill="#7b838a">
      <circle cx="15" cy="15" r="11.500" />
      {[30, 90, 150, 210, 270, 330].map((a) => (
        <path key={a} d="M9.500 6 11.800.8c.2-.4.6-.6 1-.6h4.400c.4 0 .8.2 1 .6L20.500 6z" transform={`rotate(${a} 15 15)`} />
      ))}
    </g>
    <circle cx="15" cy="15" r="7.300" fill="#e9edf0" />
    <circle cx="15" cy="15" r="5.500" fill="#0f5ba7" />
  </Svg>
);
const VsCode = () => (
  <Svg className="h-[30px] w-[30px]" box="0 0 30 30">
    <path d="M22 .3 29 3.500c.6.300 1 .8 1 1.500v20c0 .7-.4 1.200-1 1.500l-7 3.200V.3z" fill="#27a4f2" />
    <path d="M22 .3v8L3.500 22.500c-.5.400-1 .4-1.500 0L.4 21c-.5-.5-.5-1 0-1.500z" fill="#0a72c0" />
    <path d="M22 29.700v-8L3.500 7.500C3 7.100 2.500 7.100 2 7.500L.4 9c-.5.500-.5 1 0 1.500z" fill="#1287d6" />
  </Svg>
);

const apps: { id: string; el: ReactNode; dot?: boolean; active?: boolean }[] = [
  { id: "copilot", el: <Copilot /> },
  { id: "taskview", el: <TaskView /> },
  { id: "edge", el: <Edge /> },
  { id: "folder", el: <Folder />, dot: true },
  { id: "store", el: <Store /> },
  { id: "mail", el: <Mail /> },
  { id: "outlook", el: <Outlook />, dot: true },
  { id: "slack", el: <Slack />, dot: true },
  { id: "teams", el: <Teams />, dot: true },
  { id: "chrome", el: <ChromeIcon />, active: true },
  { id: "settings", el: <SettingsIcon />, dot: true },
  { id: "vscode", el: <VsCode />, dot: true },
];

function Taskbar() {
  return (
    <div className="flex h-[60px] shrink-0 border-t border-[#b9c0c8] bg-linear-to-r from-[#e3eef9] via-[#d5dff5] via-55% to-[#e1edf8] font-['Open_Sans'] text-[#1b1b1b]">
      <Svg className="mt-[13px] ml-[28px] h-[28px] w-[23px]" box="0 0 23 28">
        <path d="M3 4a4 4 0 0 1 8 0v11a6.500 6.500 0 1 1-8 0z" fill="#9bcdf8" />
        <path d="M7 7v13" stroke="#e8455a" strokeWidth="3" strokeLinecap="round" />
        <circle cx="7" cy="20.500" r="4" fill="#1584dd" />
        <path d="M15.500 4.500h6" stroke="#f5261a" strokeWidth="2.800" strokeLinecap="round" />
        <path d="M18.500 23.500V12" stroke="#f5261a" strokeWidth="3" strokeLinecap="round" />
        <path d="m14.500 14 4-6 4 6z" fill="#f5261a" />
      </Svg>
      <div className="mt-[8px] ml-[13px] w-[411px] text-[15px] leading-[20px] text-[#5a6068]">
        <div className="tracking-[-0.2px]">Today's high</div>
        <div className="tracking-[-0.35px]">Near record</div>
      </div>
      <Svg className="mt-[15px] h-[29px] w-[29px]" box="0 0 29 29">
        <defs>
          <linearGradient id="win" x1="0" y1="0" x2="1" y2="1">
            <stop stopColor="#4cc8fb" />
            <stop offset="1" stopColor="#0067c8" />
          </linearGradient>
        </defs>
        <path d="M0 1q0-1 1-1h13v14H0zM15 0h13q1 0 1 1v13H15zM0 15h14v14H1q-1 0-1-1zM15 15h14v13q0 1-1 1H15z" fill="url(#win)" />
      </Svg>
      <div className="mt-[9px] ml-[17px] flex h-[40px] w-[274px] items-center rounded-full border border-[#c6cfe4] bg-[#f2f6fd]">
        <Svg className="ml-[14px] h-[19px] w-[19px]" box="0 0 19 19">
          <circle cx="8" cy="8" r="6.800" stroke="#222" strokeWidth="2" />
          <path d="m13 13 5 5" stroke="#222" strokeWidth="2.300" strokeLinecap="round" />
        </Svg>
        <span className="ml-[12px] text-[17px] tracking-[-0.45px] text-[#5b5b5b]">Search</span>
        <div className="mr-[2px] ml-auto flex h-[34px] w-[66px] flex-col items-center rounded-full bg-[#303d48]">
          <Svg className="mt-[7px] ml-[22px] h-[8px] w-[24px]" box="0 0 24 8">
            <path d="m1 7.500 3-2.500 2 2.500M5 4l2-1 4 4.500M9 1.500l2-.5 5 6.500M14 2.500l2-1 5 6M19 3l4 4.500" stroke="#f6a21c" strokeWidth="1.200" />
          </Svg>
          <span className="text-[10px] leading-[9px] font-semibold tracking-[-0.1px] text-white">cradlepoint</span>
        </div>
      </div>
      <div className="ml-[3.5px] flex">
        {apps.map((a) => (
          <div key={a.id} className="flex w-[55px] justify-center pt-[5px]">
            <div className={`flex h-[48px] w-[48px] flex-col items-center rounded-[5px] ${a.active ? "border border-[#dfe3ee] bg-[#eef0f8]" : "border border-transparent"}`}>
              <div className="mt-[8px]">{a.el}</div>
              {a.dot && <div className="mt-[5px] h-[4px] w-[8px] rounded-full bg-[#858890]" />}
              {a.active && <div className="mt-[5px] h-[4px] w-[20px] rounded-full bg-[#0078d4]" />}
            </div>
          </div>
        ))}
      </div>
      <div className="mr-[28px] ml-auto flex items-center">
        <Svg className="h-[8px] w-[14px]" box="0 0 14 8">
          <path d="m1 7 6-5.700L13 7" stroke="#1b1b1b" strokeWidth="1.600" />
        </Svg>
        <Svg className="ml-[23px] h-[14px] w-[20px]" box="0 0 20 14">
          <path d="M4 5C5 1 11-1.500 14.500 3.500 18 3 20 6 20 8H2z" fill="#0b5cad" />
          <path d="M4 5c-2.500 0-4 2-4 4.500C0 12 2 13.500 4 13.500h12c3 0 4-2 4-4S18 5.500 15 6L8 9z" fill="#28a8ea" />
          <path d="M4.500 4.500C6.500 4 9 5.500 11 7.500l-7 5.800C1.500 13.500 0 12 0 9.500s1.800-5 4.500-5z" fill="#0f78d4" />
        </Svg>
        <Svg className="ml-[20px] h-[16px] w-[20px]" box="0 0 20 16">
          <path d="M.7 5.500a13.200 13.200 0 0 1 18.600 0M3.600 8.500a9.200 9.200 0 0 1 12.800 0M6.300 11.300a5.300 5.300 0 0 1 7.400 0" stroke="#1b1b1b" strokeWidth="1.400" strokeLinecap="round" />
          <circle cx="10" cy="13.800" r="1.700" fill="#1b1b1b" />
        </Svg>
        <Svg className="ml-[10px] h-[18px] w-[20px]" box="0 0 20 18">
          <path d="M.8 6v6h3L9 16V2L3.800 6zM12 6.200c1.500 1.500 1.500 4.100 0 5.600M14.300 3.800c3 3 3 7.400 0 10.400M16.700 1.600c4 4.400 4 10.400 0 14.800" stroke="#1b1b1b" strokeWidth="1.200" strokeLinejoin="round" strokeLinecap="round" />
        </Svg>
        <Svg className="ml-[10px] h-[18px] w-[20px]" box="0 0 20 18">
          <path d="M7 4h8.500a2 2 0 0 1 2 2v7a2 2 0 0 1-2 2h-12a2 2 0 0 1-2-2v-3" stroke="#1b1b1b" strokeWidth="1.300" />
          <path d="M6.500 6H15.500v7h-12v-2.500zM18.300 8h1.500v3.500h-1.500z" fill="#1b1b1b" />
          <path d="M5 0 .5 6H3l-1 4.500L6.500 5H4z" fill="#1b1b1b" />
        </Svg>
        <div className="-mt-px ml-[10px] w-[80px] text-right text-[15px] leading-[20px]">
          <div className="tracking-[-0.3px]">12:27 PM</div>
          <div className="tracking-[-0.2px]">1/19/2024</div>
        </div>
        <Svg className="ml-[11px] h-[20px] w-[16px]" box="0 0 16 20">
          <path d="M8 .5c3.600 0 6 2.600 6 6V12l2 4H0l2-4V6.500c0-3.400 2.400-6 6-6zM5 17h6c-.4 1.700-1.500 2.500-3 2.500S5.400 18.700 5 17z" fill="#0a3f96" />
        </Svg>
      </div>
    </div>
  );
}

export default function App() {
  return (
    <div className="flex h-[1200px] w-[1920px] flex-col overflow-hidden font-['Noto_Sans',sans-serif]">
      <TabStrip />
      <Toolbar />
      <AwsNav />
      <div className="flex h-[943px] shrink-0">
        <Sidebar />
        <Main />
        <RightRail />
      </div>
      <Footer />
      <Taskbar />
    </div>
  );
}
